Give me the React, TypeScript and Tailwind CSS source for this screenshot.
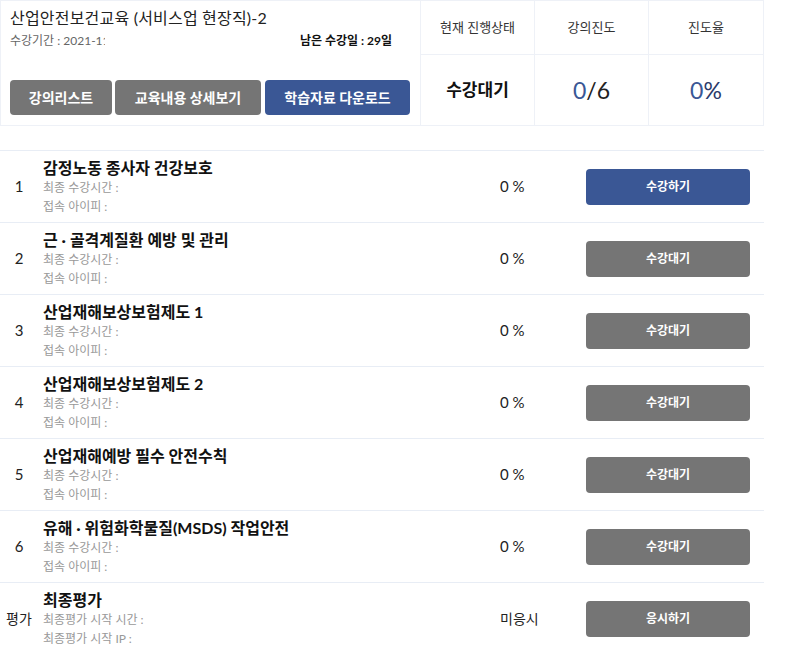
import React from "react";

const rows = [
  { no: "1", title: "감정노동 종사자 건강보호", pct: "0 %", btn: "수강하기", active: true },
  { no: "2", title: "근 · 골격계질환 예방 및 관리", pct: "0 %", btn: "수강대기", active: false },
  { no: "3", title: "산업재해보상보험제도 1", pct: "0 %", btn: "수강대기", active: false },
  { no: "4", title: "산업재해보상보험제도 2", pct: "0 %", btn: "수강대기", active: false },
  { no: "5", title: "산업재해예방 필수 안전수칙", pct: "0 %", btn: "수강대기", active: false },
  { no: "6", title: "유해 · 위험화학물질(MSDS) 작업안전", pct: "0 %", btn: "수강대기", active: false },
];

export default function App() {
  return (
    <div
      className="w-[800px] h-[645px] overflow-hidden bg-white text-[#222]"
      style={{ fontFamily: "Lato, 'Noto Sans CJK KR', sans-serif" }}
    >
      <div className="w-[764px]">
        {/* Top panel */}
        <div className="flex h-[126px] border border-[#eef1f7]">
          <div className="w-[419px] shrink-0 pl-[9px] pt-[7px]">
            <div className="text-[16px] leading-[20px] tracking-[0.2px] text-[#222]">산업안전보건교육 (서비스업 현장직)-2</div>
            <div className="flex items-center h-[25px] pr-[28px] text-[12px]">
              <span className="w-[95px] overflow-hidden whitespace-nowrap text-[#666]">수강기간 : 2021-11-01 ~ 2021-11-30</span>
              <span className="ml-auto font-bold text-[#111]">남은 수강일 : 29일</span>
            </div>
            <div className="flex gap-[3px] mt-[27px]">
              <button className="w-[102px] h-[35px] shrink-0 rounded-[4px] bg-[#757575] text-white text-[14px] font-bold">강의리스트</button>
              <button className="w-[146px] h-[35px] shrink-0 rounded-[4px] bg-[#757575] text-white text-[14px] font-bold">교육내용 상세보기</button>
              <button className="w-[145px] h-[35px] shrink-0 rounded-[4px] bg-[#3a5795] text-white text-[14px] font-bold ml-[1px]">학습자료 다운로드</button>
            </div>
          </div>
          <div className="flex-1 grid grid-cols-3 grid-rows-[54px_1fr] border-l border-[#eef1f7]">
            <div className="flex items-center justify-center text-[13px] text-[#333] border-b border-r border-[#eef1f7]">현재 진행상태</div>
            <div className="flex items-center justify-center text-[13px] text-[#333] border-b border-r border-[#eef1f7]">강의진도</div>
            <div className="flex items-center justify-center text-[13px] text-[#333] border-b border-[#eef1f7]">진도율</div>
            <div className="flex items-center justify-center text-[17px] font-bold text-[#111] border-r border-[#eef1f7]">수강대기</div>
            <div className="flex items-center justify-center text-[23px] font-normal text-[#222] border-r border-[#eef1f7]">
              <span className="text-[#3a5795]">0</span>/6
            </div>
            <div className="flex items-center justify-center text-[23px] font-normal text-[#2a3a6a]">
              <span className="text-[#3a5795]">0</span>%
            </div>
          </div>
        </div>

        {/* List */}
        <div className="mt-[24px]">
          {rows.map((r) => (
            <div key={r.no} className="flex items-center h-[72px] border-t border-[#e8edf5]">
              <div className="w-[38px] text-center text-[15px] text-[#222]">{r.no}</div>
              <div className="w-[457px] pl-[5px]">
                <div className="text-[16px] leading-[20px] font-bold text-[#111]">{r.title}</div>
                <div className="text-[12px] leading-[19px] text-[#999]">최종 수강시간 :</div>
                <div className="text-[12px] leading-[19px] text-[#999]">접속 아이피 :</div>
              </div>
              <div className="w-[91px] text-[15px] text-[#222] pl-[5px]">{r.pct}</div>
              <button
                className={`w-[164px] h-[36px] rounded-[4px] text-white text-[12px] font-bold ${
                  r.active ? "bg-[#3a5795]" : "bg-[#757575]"
                }`}
              >
                {r.btn}
              </button>
            </div>
          ))}
          <div className="flex items-center h-[72px] border-t border-[#e8edf5]">
            <div className="w-[38px] text-center text-[14px] text-[#222]">평가</div>
            <div className="w-[457px] pl-[5px]">
              <div className="text-[16px] leading-[20px] font-bold text-[#111]">최종평가</div>
              <div className="text-[12px] leading-[19px] text-[#999]">최종평가 시작 시간 :</div>
              <div className="text-[12px] leading-[19px] text-[#999]">최종평가 시작 IP :</div>
            </div>
            <div className="w-[91px] text-[14px] text-[#222] pl-[5px]">미응시</div>
            <button className="w-[164px] h-[36px] rounded-[4px] bg-[#757575] text-white text-[12px] font-bold">응시하기</button>
          </div>
        </div>
      </div>
    </div>
  );
}
